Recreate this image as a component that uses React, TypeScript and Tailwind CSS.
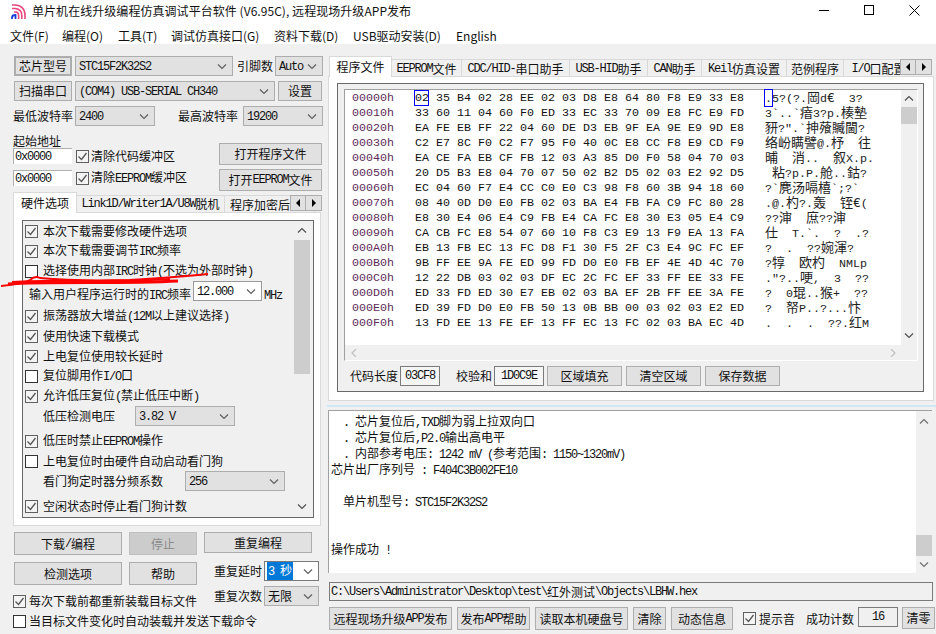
import React from "react";

const MONO = "[font-family:'Liberation_Mono','Noto_Sans_CJK_SC',monospace]";

const HEX_ROWS: [string, string, string][] = [
  ["00000h", "02 35 B4 02 28 EE 02 03 D8 E8 64 80 F8 E9 33 E8", ".5?(?.岡d€  3?"],
  ["00010h", "33 60 11 04 60 F0 ED 33 EC 33 70 09 E8 FC E9 FD", "3`..`瘖3?p.楱墊"],
  ["00020h", "EA FE EB FF 22 04 60 DE D3 EB 9F EA 9E E9 9D E8", "豜?\".`抻蕵贓閫?"],
  ["00030h", "C2 E7 8C F0 C2 F7 95 F0 40 0C E8 CC F8 E9 CD F9", "络岎瞒譬@.杼  往"],
  ["00040h", "EA CE FA EB CF FB 12 03 A3 85 D0 F0 58 04 70 03", "晡  消..  叙X.p."],
  ["00050h", "20 D5 B3 E8 04 70 07 50 02 B2 D5 02 03 E2 92 D5", " 粘?p.P.舱..鈷?"],
  ["00060h", "EC 04 60 F7 E4 CC C0 E0 C3 98 F8 60 3B 94 18 60", "?`麂汤嗝橲`;?`"],
  ["00070h", "08 40 0D D0 E0 FB 02 03 BA E4 FB FA C9 FC 80 28", ".@.杓?.轰  铚€("],
  ["00080h", "E8 30 E4 06 E4 C9 FB E4 CA FC E8 30 E3 05 E4 C9", "??渖  庶??渖"],
  ["00090h", "CA CB FC E8 54 07 60 10 F8 C3 E9 13 F9 EA 13 FA", "仕  T.`.  ?  .?"],
  ["000A0h", "EB 13 FB EC 13 FC D8 F1 30 F5 2F C3 E4 9C FC EF", "?  .  ??婉渾?"],
  ["000B0h", "9B FF EE 9A FE ED 99 FD D0 E0 FB EF 4E 4D 4C 70", "?犉  欧杓  NMLp"],
  ["000C0h", "12 22 DB 03 02 03 DF EC 2C FC EF 33 FF EE 33 FE", ".\"?..哽,  3  ??"],
  ["000D0h", "ED 33 FD ED 30 E7 EB 02 03 BA EF 2B FF EE 3A FE", "?  0琨..猴+  ??"],
  ["000E0h", "ED 39 FD D0 E0 FB 50 13 0B BB 00 03 02 03 E2 ED", "?  帑P..?...忭"],
  ["000F0h", "13 FD EE 13 FE EF 13 FF EC 13 FC 02 03 BA EC 4D", ".  .  .  ??.红M"],
];

const LOG_LINES = [
  "  . 芯片复位后,TXD脚为弱上拉双向口",
  "  . 芯片复位后,P2.0输出高电平",
  "  . 内部参考电压: 1242 mV (参考范围: 1150~1320mV)",
  "芯片出厂序列号 : F404C3B002FE10",
  " ",
  "  单片机型号: STC15F2K32S2",
  " ",
  " ",
  "操作成功 !",
];

const RIGHT_TABS = [
  ["EEPROM文件", "w-[70px]"],
  ["CDC/HID-串口助手", "w-[108px]"],
  ["USB-HID助手", "w-[78px]"],
  ["CAN助手", "w-[54px]"],
  ["Keil仿真设置", "w-[85px]"],
  ["范例程序", "w-[57px]"],
  ["I/O口配置", "w-[70px]"],
];

// latin runs get a squeezed mono so they take 6px per char like the old bitmap font
function Sim({ text, latin = "text-[12px] tracking-[-1.2px]" }: { text: string; latin?: string }) {
  return (
    <>
      {text.split(/([\x00-\x7f]+)/).map((part, i) =>
        i % 2 === 1 ? (
          <span key={i} className={`${MONO} ${latin}`}>
            {part}
          </span>
        ) : (
          <span key={i}>{part}</span>
        )
      )}
    </>
  );
}

function Chevron({ dir = "down", className = "" }: { dir?: "up" | "down" | "left" | "right"; className?: string }) {
  const d = {
    down: "M1 1.5 L5 5.5 L9 1.5",
    up: "M1 5.5 L5 1.5 L9 5.5",
    left: "M7 0 L3 4 L7 8",
    right: "M3 0 L7 4 L3 8",
  }[dir];
  return (
    <svg width="10" height={dir === "up" || dir === "down" ? 7 : 8} fill="none" stroke="currentColor" className={className}>
      <path d={d} strokeWidth="1.2" />
    </svg>
  );
}

function Btn({ text, className = "", disabled }: { text: string; className?: string; disabled?: boolean }) {
  return (
    <div
      className={`flex shrink-0 items-center justify-center border whitespace-nowrap ${
        disabled ? "border-[#bfbfbf] bg-[#cccccc] text-[#8a8a8a]" : "border-[#adadad] bg-[#e1e1e1]"
      } ${className}`}
    >
      <Sim text={text} />
    </div>
  );
}

function Combo({ text, className = "", white }: { text: string; className?: string; white?: boolean }) {
  return (
    <div
      className={`flex h-[20px] shrink-0 items-center justify-between border pl-[3px] pr-[5px] whitespace-pre ${
        white ? "border-[#7a7a7a] bg-white" : "border-[#adadad] bg-[#e1e1e1]"
      } ${className}`}
    >
      <span>
        <Sim text={text} />
      </span>
      <Chevron className="text-[#606060]" />
    </div>
  );
}

function Box({ checked }: { checked?: boolean }) {
  return (
    <div
      className={`flex h-[13px] w-[13px] shrink-0 items-center justify-center border ${
        checked ? "border-[#5f5f5f] bg-[#f4f4f4]" : "border-[#333333] bg-white"
      }`}
    >
      {checked && (
        <svg width="11" height="11" fill="none" stroke="#555555">
          <path d="M1.5 5.5 L4.5 8.5 L9.5 2" strokeWidth="1.3" />
        </svg>
      )}
    </div>
  );
}

function CheckRow({ text, checked, className = "" }: { text: string; checked?: boolean; className?: string }) {
  return (
    <div className={`flex h-[20px] items-center gap-[5px] pl-[2px] whitespace-nowrap ${className}`}>
      <Box checked={checked} />
      <span>
        <Sim text={text} />
      </span>
    </div>
  );
}

function ArrowPair({ className = "" }: { className?: string }) {
  return (
    <div className={`absolute flex ${className}`}>
      <div className="flex h-[16px] w-[16px] items-center justify-center border border-[#adadad] bg-[#e1e1e1]">
        <div className="h-0 w-0 border-y-[4px] border-r-[4px] border-y-transparent border-r-black" />
      </div>
      <div className="flex h-[16px] w-[16px] items-center justify-center border border-l-0 border-[#adadad] bg-[#e1e1e1]">
        <div className="h-0 w-0 border-y-[4px] border-l-[4px] border-y-transparent border-l-black" />
      </div>
    </div>
  );
}

function TitleBar() {
  return (
    <div className="flex h-[24px] shrink-0 items-center pl-[11px]">
      <svg width="15" height="15" viewBox="0 0 15 15" fill="none" className="mt-[-2px]">
        <path d="M1 1 H4 C10 1 14 5 14 11 V15" stroke="#e8487c" strokeWidth="1.6" />
        <path d="M1 4.5 H4 C8 4.5 10.8 7.5 10.8 11 V15" stroke="#e8487c" strokeWidth="1.6" />
        <path d="M3 8 H4.5 C6.5 8 7.6 9.5 7.6 11.5 V15" stroke="#e8487c" strokeWidth="1.6" />
        <path d="M1 15 V13.5 C1 12 2.5 11 4.5 11 V15" stroke="#1b3fd8" strokeWidth="1.8" />
      </svg>
      <span className="ml-[6px] text-[12px] leading-[16px] mt-[-2px] tracking-[0.05px]">单片机在线升级编程仿真调试平台软件 (V6.95C), 远程现场升级APP发布</span>
      <div className="ml-auto flex items-center pr-[16px] mt-[-4px]">
        <div className="h-px w-[10px] bg-black" />
        <div className="ml-[35px] h-[10px] w-[10px] border border-black" />
        <svg width="11" height="11" className="ml-[35px]" stroke="black">
          <path d="M0.5 0.5 L10.5 10.5 M10.5 0.5 L0.5 10.5" />
        </svg>
      </div>
    </div>
  );
}

function MenuBar() {
  const items = [
    ["文件(F)", "w-[52px]"],
    ["编程(O)", "w-[56px]"],
    ["工具(T)", "w-[53px]"],
    ["调试仿真接口(G)", "w-[103px]"],
    ["资料下载(D)", "w-[79px]"],
    ["USB驱动安装(D)", "w-[103px]"],
    ["English", "w-[45px]"],
  ];
  return (
    <div className="flex h-[20px] shrink-0 items-center pl-[10px] pt-[3px] text-[12px]">
      {items.map(([t, w]) => (
        <span key={t} className={`whitespace-nowrap ${w}`}>
          {t}
        </span>
      ))}
    </div>
  );
}

function HardwareOptions() {
  return (
    <div className="ml-[-1px] flex h-[314px] w-[308px] flex-col border border-[#d9d9d9] bg-white px-[8px] py-[7px]">
      <div className="flex h-[298px] w-[292px] border border-[#696969] bg-[#f0f0f0]">
        <div className="w-[271px] shrink-0">
          <CheckRow checked text="本次下载需要修改硬件选项" />
          <CheckRow checked text="本次下载需要调节IRC频率" />
          <CheckRow text="选择使用内部IRC时钟(不选为外部时钟)" />
          <div className="flex h-[25px] whitespace-nowrap">
            <span className="ml-[6px] mt-[5px] w-[164px]">
              <Sim text="输入用户程序运行时的IRC频率" />
            </span>
            <Combo white text="12.000" className="w-[69px] border-[#999999]" />
            <span className="ml-[2px] mt-[5px]">
              <Sim text="MHz" />
            </span>
          </div>
          <CheckRow checked text="振荡器放大增益(12M以上建议选择)" />
          <CheckRow checked text="使用快速下载模式" />
          <CheckRow checked text="上电复位使用较长延时" />
          <CheckRow text="复位脚用作I/O口" />
          <CheckRow checked text="允许低压复位(禁止低压中断)" />
          <div className="flex h-[20px] items-center whitespace-nowrap">
            <span className="ml-[20px] w-[92px]">低压检测电压</span>
            <Combo text="3.82 V" className="w-[100px]" />
          </div>
          <CheckRow checked text="低压时禁止EEPROM操作" className="mt-[5px]" />
          <CheckRow text="上电复位时由硬件自动启动看门狗" />
          <div className="flex h-[20px] items-center whitespace-nowrap">
            <span className="ml-[20px] w-[142px]">看门狗定时器分频系数</span>
            <Combo text="256" className="w-[100px]" />
          </div>
          <CheckRow checked text="空闲状态时停止看门狗计数" className="mt-[5px]" />
        </div>
        <div className="flex w-[16px] flex-col text-[#505050]">
          <div className="flex h-[19px] items-center justify-center">
            <Chevron dir="up" />
          </div>
          <div className="h-[134px] bg-[#cdcdcd]" />
          <div className="flex-1" />
          <div className="mb-px flex h-[20px] items-center justify-center">
            <Chevron />
          </div>
        </div>
      </div>
    </div>
  );
}

function LeftColumn() {
  return (
    <div className="flex w-[327px] shrink-0 flex-col pl-[14px] pt-[12px]">
      <div className="flex h-[20px] items-center">
        <Btn text="芯片型号" className="h-[20px] w-[58px] border-2 border-[#0078d7]" />
        <Combo text="STC15F2K32S2" className="ml-[3px] w-[158px]" />
        <span className="ml-[4px] w-[36px] whitespace-nowrap">引脚数</span>
        <Combo text="Auto" className="ml-[2px] w-[48px]" />
      </div>
      <div className="mt-[5px] flex h-[20px] items-center">
        <Btn text="扫描串口" className="h-[20px] w-[58px]" />
        <Combo text="(COM4) USB-SERIAL CH340" className="ml-[3px] w-[200px]" />
        <Btn text="设置" className="ml-[3px] h-[20px] w-[44px]" />
      </div>
      <div className="mt-[5px] flex h-[20px] items-center">
        <span className="ml-[-1px] w-[62px] whitespace-nowrap">最低波特率</span>
        <Combo text="2400" className="w-[80px]" />
        <span className="ml-[23px] w-[60px] whitespace-nowrap">最高波特率</span>
        <Combo text="19200" className="ml-[5px] w-[80px]" />
      </div>
      <div className="mt-[7px] flex">
        <div className="ml-[-1px] w-[206px] shrink-0">
          <div className="h-[15px] leading-[15px]">起始地址</div>
          <div className="flex h-[16px] items-center">
            <div className="flex h-[16px] w-[59px] items-center border-t border-l border-[#b0b0b0] bg-white pl-px">
              <Sim text="0x0000" />
            </div>
            <div className="ml-[4px]">
              <Box checked />
            </div>
            <span className="ml-[2px] whitespace-nowrap">清除代码缓冲区</span>
          </div>
          <div className="mt-[6px] flex h-[16px] items-center">
            <div className="flex h-[16px] w-[59px] items-center border-t border-l border-[#b0b0b0] bg-white pl-px">
              <Sim text="0x0000" />
            </div>
            <div className="ml-[4px]">
              <Box checked />
            </div>
            <span className="ml-[2px] whitespace-nowrap">
              <Sim text="清除EEPROM缓冲区" />
            </span>
          </div>
        </div>
        <div className="pt-[10px]">
          <Btn text="打开程序文件" className="h-[22px] w-[103px]" />
          <Btn text="打开EEPROM文件" className="mt-[4px] h-[22px] w-[103px]" />
        </div>
      </div>
      <div className="relative z-10 ml-[-1px] mt-px flex h-[21px] w-[309px] items-start overflow-hidden">
        <div className="flex h-[21px] w-[64px] items-center justify-center border border-b-0 border-[#d9d9d9] bg-white">硬件选项</div>
        <div className="mt-[3px] flex h-[18px] w-[148px] shrink-0 items-center justify-center border border-l-0 border-[#d9d9d9] whitespace-nowrap">
          <Sim text="Link1D/Writer1A/U8W脱机" />
        </div>
        <div className="mt-[3px] flex h-[18px] shrink-0 items-center border-r border-t border-[#d9d9d9] pl-[5px] whitespace-nowrap">程序加密后传输</div>
        <ArrowPair className="right-0 top-[3px]" />
      </div>
      <div className="mt-[-1px]">
        <HardwareOptions />
      </div>
      <div className="mt-[6px] flex items-start">
        <Btn text="下载/编程" className="h-[23px] w-[108px]" />
        <Btn disabled text="停止" className="ml-[7px] h-[23px] w-[68px]" />
        <Btn text="重复编程" className="ml-[7px] h-[21px] w-[108px]" />
      </div>
      <div className="mt-[6px] flex">
        <div className="w-[199px] shrink-0 pt-px">
          <div className="flex">
            <Btn text="检测选项" className="h-[23px] w-[108px]" />
            <Btn text="帮助" className="ml-[7px] h-[23px] w-[68px]" />
          </div>
          <div className="ml-[-1px] mt-[9px] flex h-[14px] items-center gap-[3px] whitespace-nowrap">
            <Box checked />
            每次下载前都重新装载目标文件
          </div>
          <div className="ml-[-1px] mt-[6px] flex h-[14px] items-center gap-[3px] whitespace-nowrap">
            <Box />
            当目标文件变化时自动装载并发送下载命令
          </div>
        </div>
        <div className="ml-[1px]">
          <div className="flex h-[20px] items-center">
            <span className="w-[50px] whitespace-nowrap">重复延时</span>
            <div className="flex h-[20px] w-[55px] items-center justify-between border border-[#7a7a7a] bg-white pl-[2px] pr-[5px]">
              <span className="bg-[#0078d7] px-px text-white whitespace-pre">
                <Sim text="3 秒" />
              </span>
              <Chevron className="text-[#606060]" />
            </div>
          </div>
          <div className="mt-[5px] flex h-[20px] items-center">
            <span className="w-[50px] whitespace-nowrap">重复次数</span>
            <Combo text="无限" className="w-[55px]" />
          </div>
        </div>
      </div>
    </div>
  );
}

function HexView() {
  return (
    <div className="ml-[6px] mt-[5px] flex h-[272px] w-[574px] flex-col border-t border-l border-r border-b border-t-[#a0a0a0] border-l-[#a0a0a0] border-r-white border-b-white">
      <div className="flex h-[255px]">
        <div className={`flex-1 bg-white pt-px text-[11.67px] leading-[15px] whitespace-pre ${MONO}`}>
          {HEX_ROWS.map(([addr, hex, ascii], r) => (
            <div key={addr} className="flex h-[15px] pl-[7px]">
              <span className="w-[63px] text-[#5e2a58]">{addr}</span>
              {hex.split(" ").map((b, c) => (
                <span key={c} className="w-[21px] text-[#111111]">
                  <span className={r === 0 && c === 0 ? "inline-block h-[14px] w-[13px] ring-1 ring-[#0000ff]" : ""}>{b}</span>
                </span>
              ))}
              <span className="relative ml-[14px] text-[13px] text-[#222222]">
                {r === 0 && <span className="absolute left-0 top-[-1px] h-[16px] w-[7px] ring-1 ring-[#0000ff]" />}
                <Sim text={ascii} latin="text-[11.67px]" />
              </span>
            </div>
          ))}
        </div>
        <div className="flex w-[16px] flex-col text-[#505050]">
          <div className="flex h-[17px] items-center justify-center">
            <Chevron dir="up" />
          </div>
          <div className="h-[17px] bg-[#cdcdcd]" />
          <div className="flex-1" />
          <div className="flex h-[20px] items-center justify-center">
            <Chevron />
          </div>
        </div>
      </div>
      <div className="flex h-[15px] items-center justify-between pl-[4px] pr-[19px] text-[#c0c0c0]">
        <Chevron dir="left" />
        <Chevron dir="right" />
      </div>
    </div>
  );
}

function RightColumn() {
  return (
    <div className="flex min-w-0 flex-1 flex-col pt-[12px]">
      <div className="relative z-10 ml-[2px] flex h-[21px] w-[603px] items-start overflow-hidden">
        <div className="flex h-[21px] w-[63px] shrink-0 items-center justify-center border border-b-0 border-[#d9d9d9] bg-white">程序文件</div>
        {RIGHT_TABS.map(([t, w]) => (
          <div key={t} className={`mt-[3px] flex h-[18px] shrink-0 items-center justify-center border border-l-0 border-b-0 border-[#d9d9d9] whitespace-nowrap ${w}`}>
            <Sim text={t} />
          </div>
        ))}
        <ArrowPair className="right-0 top-[3px]" />
      </div>
      <div className="ml-px mt-[-1px] h-[325px] w-[606px] border border-[#d9d9d9] bg-white px-[8px] py-[6px]">
        <div className="h-[309px] w-[587px] border border-[#696969] bg-[#f0f0f0]">
          <HexView />
          <div className="mt-[5px] flex h-[20px] items-center pl-[12px] whitespace-nowrap">
            <span className="w-[50px]">代码长度</span>
            <div className="flex h-[20px] w-[40px] items-center justify-center border border-[#7a7a7a] bg-[#f5f5f5]">
              <Sim text="03CF8" />
            </div>
            <span className="ml-[16px] w-[38px]">校验和</span>
            <div className="flex h-[20px] w-[50px] items-center justify-center border border-[#7a7a7a] bg-[#f5f5f5]">
              <Sim text="1D0C9E" />
            </div>
            <Btn text="区域填充" className="ml-[3px] h-[20px] w-[75px]" />
            <Btn text="清空区域" className="ml-[4px] h-[20px] w-[75px]" />
            <Btn text="保存数据" className="ml-[4px] h-[20px] w-[75px]" />
          </div>
        </div>
      </div>
      <div className="mt-[4px] h-[2px] bg-[#cfe6f5]" />
      <div className="ml-px mt-[3px] flex h-[163px] w-[604px] border-t border-l border-[#a0a0a0] bg-white">
        <div className="flex-1 pl-[2px] pt-[2px] leading-[16px] whitespace-pre">
          {LOG_LINES.map((line, i) => (
            <div key={i} className="h-[16px]">
              <Sim text={line} />
            </div>
          ))}
        </div>
        <div className="flex w-[16px] flex-col bg-[#f0f0f0] text-[#707070]">
          <div className="flex h-[20px] items-center justify-center">
            <Chevron dir="up" />
          </div>
          <div className="flex-1" />
          <div className="h-[21px] bg-[#cdcdcd]" />
          <div className="flex h-[17px] items-center justify-center">
            <Chevron />
          </div>
        </div>
      </div>
      <div className="ml-[2px] mt-[9px] flex h-[19px] w-[604px] items-center border border-[#7a7a7a] pl-px whitespace-pre">
        <Sim text="C:\Users\Administrator\Desktop\test\红外测试\Objects\LBHW.hex" />
      </div>
      <div className="ml-[2px] mt-[6px] flex items-start whitespace-nowrap">
        <Btn text="远程现场升级APP发布" className="h-[23px] w-[123px]" />
        <Btn text="发布APP帮助" className="ml-[5px] h-[23px] w-[73px]" />
        <Btn text="读取本机硬盘号" className="ml-[5px] h-[23px] w-[93px]" />
        <Btn text="清除" className="ml-[5px] h-[23px] w-[33px]" />
        <Btn text="动态信息" className="ml-[5px] h-[23px] w-[62px]" />
        <div className="ml-[10px] flex h-[23px] items-center">
          <Box checked />
          <span className="ml-[3px]">提示音</span>
          <span className="ml-[11px]">成功计数</span>
        </div>
        <div className="ml-[4px] flex h-[20px] w-[40px] items-center justify-center border border-[#7a7a7a]">
          <Sim text="16" />
        </div>
        <Btn text="清零" className="ml-[4px] h-[22px] w-[33px]" />
      </div>
    </div>
  );
}

export default function App() {
  return (
    <div className="relative flex h-[634px] w-[936px] flex-col overflow-hidden bg-white text-[12px] leading-[16px] text-[#111111] [font-family:'Noto_Sans_CJK_SC',sans-serif]">
      <TitleBar />
      <MenuBar />
      <div className="flex min-h-0 flex-1 bg-[#f0f0f0]">
        <LeftColumn />
        <RightColumn />
      </div>
      {/* red pen scribble over the IRC option */}
      <svg width="210" height="20" viewBox="0 270 210 20" fill="none" stroke="#ff0000" className="absolute left-0 top-[270px]">
        <path d="M1 286 C12 285 24 283 30 280 C33 277 36 276 40 278 C60 280 90 281 130 280 C165 278 190 276 208 274" strokeWidth="1.8" />
        <path d="M8 284 C50 281 120 284 178 281" strokeWidth="3" />
        <path d="M12 282 C60 279 110 283 170 279" strokeWidth="2" />
      </svg>
    </div>
  );
}
